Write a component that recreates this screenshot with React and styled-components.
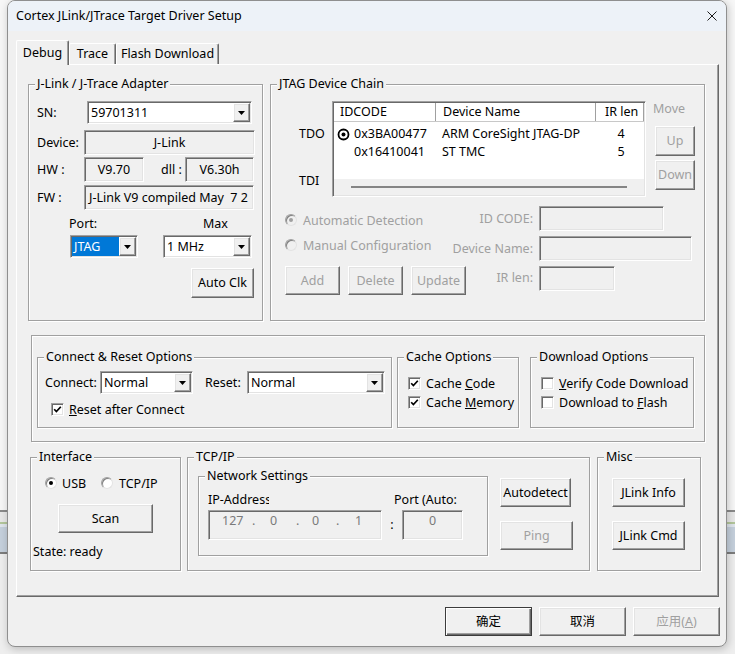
import React from "react";
import styled, { createGlobalStyle, css } from "styled-components";

const GlobalStyle = createGlobalStyle`
  * { box-sizing: border-box; }
  html, body { margin: 0; padding: 0; }
  body {
    width: 735px;
    height: 654px;
    overflow: hidden;
    background: linear-gradient(
      to bottom,
      #f7f7f7 0 510px,
      #8a8a8a 510px 512px,
      #e8e8e8 512px 522px,
      #b3c69b 522px 524px,
      #dfe5ec 524px 527px,
      #c5d0dc 527px 552px,
      #7d7d7d 552px 554px,
      #eeeeee 554px
    );
    font-family: "Noto Sans", "Noto Sans CJK SC", sans-serif;
    font-size: 12.5px;
    color: #000;
  }
`;

const sunken = css`
  border: 1px solid;
  border-color: #a0a0a0 #fff #fff #a0a0a0;
  box-shadow: inset 1px 1px 0 #696969, inset -1px -1px 0 #e3e3e3;
`;

const raised = css`
  border: 1px solid;
  border-color: #fff #696969 #696969 #fff;
  box-shadow: inset -1px -1px 0 #a0a0a0, inset 1px 1px 0 #e3e3e3;
`;

const etched = css`
  border: 1px solid #a0a0a0;
  box-shadow: 1px 1px 0 #fff, inset 1px 1px 0 #fff;
`;

const Window = styled.div`
  margin-left: 7px;
  width: 720px;
  height: 647px;
  border: 1px solid #8f8f8f;
  border-radius: 8px;
  background: #f0f0f0;
  box-shadow: 1px 2px 8px rgba(0, 0, 0, 0.22);
  overflow: hidden;
  display: flex;
  flex-direction: column;
`;

const TitleBar = styled.div`
  flex: none;
  height: 30px;
  background: #edf2f8;
  display: flex;
  align-items: center;
  padding-left: 8px;
  line-height: 16px;
`;

const CloseBox = styled.div`
  margin-left: auto;
  margin-right: 9px;
  display: flex;
`;

const Body = styled.div`
  flex: 1;
  display: flex;
  flex-direction: column;
  padding: 9px 0 0 8px;
`;

const TabStrip = styled.div`
  display: flex;
  align-items: flex-end;
  height: 24px;
  position: relative;
  z-index: 1;
`;

const Tab = styled.div`
  width: ${p => p.$w}px;
  height: ${p => (p.$active ? 25 : 21)}px;
  margin-bottom: ${p => (p.$active ? -1 : 0)}px;
  display: flex;
  align-items: center;
  justify-content: center;
  background: #f0f0f0;
  border-top: 1px solid #fff;
  border-left: 1px solid #fff;
  border-right: 1px solid #696969;
  box-shadow: inset -1px 0 0 #a0a0a0;
  border-radius: 2px 2px 0 0;
  line-height: 16px;
`;

const TabPanel = styled.div`
  width: 703px;
  height: 533px;
  border: 1px solid;
  border-color: #fff #696969 #696969 #fff;
  box-shadow: inset -1px -1px 0 #a0a0a0;
  display: flex;
  flex-direction: column;
`;

const PanelRow = styled.div`
  display: flex;
  align-items: flex-start;
  margin: ${p => p.$mt}px 0 0 ${p => p.$ml}px;
`;

const Group = styled.div`
  ${etched};
  position: relative;
  flex: none;
  width: ${p => p.$w}px;
  height: ${p => p.$h}px;
  margin: ${p => p.$mt || 0}px 0 0 ${p => p.$ml || 0}px;
  display: flex;
  flex-direction: column;
`;

const GroupTitle = styled.span`
  position: absolute;
  top: -9px;
  left: 6px;
  padding: 0 2px;
  background: #f0f0f0;
  line-height: 16px;
  white-space: nowrap;
`;

const OptionsFrame = styled.div`
  ${etched};
  width: 674px;
  height: 107px;
  margin: 14px 0 0 14px;
  padding: 21px 0 0 5px;
  display: flex;
  align-items: flex-start;
`;

const Row = styled.div`
  flex: none;
  display: flex;
  align-items: ${p => (p.$top ? "flex-start" : "center")};
  height: ${p => p.$h || 16}px;
  margin-top: ${p => p.$mt || 0}px;
  padding-left: ${p => p.$pl || 0}px;
  width: ${p => (p.$w ? p.$w + "px" : "auto")};
  overflow: ${p => (p.$clip ? "hidden" : "visible")};
`;

const Label = styled.span`
  flex: none;
  width: ${p => (p.$w ? p.$w + "px" : "auto")};
  margin-left: ${p => p.$ml || 0}px;
  white-space: pre;
  line-height: 16px;
  color: ${p => (p.$disabled ? "#a0a0a0" : "inherit")};
`;

const Field = styled.div`
  ${sunken};
  flex: none;
  width: ${p => p.$w}px;
  height: ${p => p.$h || 25}px;
  margin-left: ${p => p.$ml || 0}px;
  align-self: ${p => (p.$top ? "start" : "auto")};
  background: #f0f0f0;
  display: flex;
  align-items: center;
  justify-content: ${p => (p.$center ? "center" : "flex-start")};
  padding: 0 4px;
  white-space: pre;
  overflow: hidden;
  line-height: 16px;
`;

const ComboBox = styled.div`
  ${sunken};
  flex: none;
  width: ${p => p.$w}px;
  height: 23px;
  margin-left: ${p => p.$ml || 0}px;
  padding: 1px;
  background: #fff;
  display: flex;
`;

const ComboValue = styled.span`
  flex: 1;
  display: flex;
  align-items: center;
  padding-left: 2px;
  white-space: nowrap;
  line-height: 16px;
  background: ${p => (p.$selected ? "#0078d7" : "transparent")};
  color: ${p => (p.$selected ? "#fff" : "#000")};
`;

const DropBtn = styled.span`
  ${raised};
  flex: none;
  width: 17px;
  background: #f0f0f0;
  display: flex;
  align-items: center;
  justify-content: center;
`;

const Btn = styled.button`
  ${raised};
  flex: none;
  font: inherit;
  line-height: 16px;
  padding: 0;
  width: ${p => p.$w}px;
  height: ${p => p.$h || 29}px;
  margin: ${p => p.$mt || 0}px 0 0 ${p => p.$ml || 0}px;
  background: #f0f0f0;
  color: ${p => (p.disabled ? "#a0a0a0" : "#000")};
  display: flex;
  align-items: center;
  justify-content: center;
  ${p =>
    p.$default &&
    css`
      border-color: #3c3c3c;
      box-shadow: inset 1px 1px 0 #fff, inset -1px -1px 0 #696969, inset -2px -2px 0 #a0a0a0;
    `}
`;

const ButtonCol = styled.div`
  display: flex;
  flex-direction: column;
  gap: 14px;
  margin: ${p => p.$mt}px 0 0 ${p => p.$ml}px;
`;

const CheckRow = styled.label`
  display: flex;
  align-items: center;
  gap: 5px;
  height: 16px;
  white-space: nowrap;
`;

const CheckBox = styled.span`
  ${sunken};
  flex: none;
  width: 13px;
  height: 13px;
  background: #fff;
  display: flex;
  align-items: center;
  justify-content: center;
`;

const RadioRow = styled.label`
  flex: none;
  display: flex;
  align-items: center;
  gap: ${p => p.$gap || 5}px;
  width: ${p => (p.$w ? p.$w + "px" : "auto")};
  height: 16px;
  margin-top: ${p => p.$mt || 0}px;
  white-space: nowrap;
  color: ${p => (p.$disabled ? "#a0a0a0" : "#000")};
`;

const RadioCircle = styled.span`
  flex: none;
  width: 12px;
  height: 12px;
  border-radius: 50%;
  border: 1px solid;
  border-color: #a0a0a0 #e3e3e3 #e3e3e3 #a0a0a0;
  box-shadow: inset 1px 1px 0 #808080;
  background: ${p => (p.$disabled ? "#f0f0f0" : "#fff")};
  display: flex;
  align-items: center;
  justify-content: center;
  &::after {
    content: "";
    display: ${p => (p.$checked ? "block" : "none")};
    width: 4px;
    height: 4px;
    border-radius: 50%;
    background: ${p => (p.$disabled ? "#a0a0a0" : "#000")};
  }
`;

const PinCol = styled.div`
  flex: none;
  width: 61px;
  padding-left: 28px;
  display: flex;
  flex-direction: column;
`;

const PinLabel = styled.span`
  line-height: 16px;
  margin-top: ${p => p.$mt}px;
`;

const ListBox = styled.div`
  ${sunken};
  flex: none;
  width: 314px;
  height: 96px;
  padding: 1px;
  background: #fff;
  display: flex;
  flex-direction: column;
`;

const ListHead = styled.div`
  flex: none;
  display: flex;
  height: 19px;
  border-bottom: 1px solid #c8c8c8;
`;

const HeadCell = styled.div`
  flex: ${p => (p.$w ? "none" : "1")};
  width: ${p => (p.$w ? p.$w + "px" : "auto")};
  padding-left: ${p => p.$pl}px;
  border-right: 1px solid #a0a0a0;
  display: flex;
  align-items: center;
  line-height: 16px;
  white-space: nowrap;
`;

const ListRows = styled.div`
  flex: 1;
  padding-top: 3px;
`;

const ListRow = styled.div`
  display: flex;
  align-items: center;
  height: 18px;
`;

const Cell = styled.div`
  flex: none;
  display: flex;
  align-items: center;
  gap: 4px;
  width: ${p => p.$w}px;
  padding-left: ${p => p.$pl || 0}px;
  justify-content: ${p => (p.$center ? "center" : "flex-start")};
  white-space: nowrap;
  line-height: 16px;
`;

const ScrollArea = styled.div`
  flex: none;
  height: 16px;
  background: #f0f0f0;
  padding: 7px 17px 0;
`;

const ScrollThumb = styled.div`
  height: 2px;
  background: #858585;
`;

const MoveCol = styled.div`
  display: flex;
  flex-direction: column;
  margin-left: 7px;
`;

const ConfigGrid = styled.div`
  display: grid;
  grid-template-columns: 161px 81px auto;
  grid-template-rows: 25px 25px 29px;
  column-gap: 6px;
  row-gap: 5px;
  margin: 9px 0 0 14px;
`;

const FieldLabel = styled.span`
  justify-self: end;
  align-self: ${p => (p.$top ? "start" : "center")};
  margin-top: ${p => (p.$top ? 4 : 0)}px;
  line-height: 16px;
  white-space: nowrap;
  color: #a0a0a0;
`;

const ButtonRow = styled.div`
  display: flex;
  gap: 8px;
`;

const NetGrid = styled.div`
  display: grid;
  grid-template-columns: 174px 20px 61px;
  grid-template-rows: 16px 30px;
  row-gap: 2px;
  margin: 15px 0 0 9px;
`;

const ClipLabel = styled.span`
  width: ${p => p.$w}px;
  overflow: hidden;
  white-space: nowrap;
  line-height: 16px;
`;

const PortLabel = styled.span`
  grid-column: 2 / 4;
  padding-left: 12px;
  line-height: 16px;
  white-space: nowrap;
`;

const IpField = styled.div`
  ${sunken};
  background: #f0f0f0;
  display: flex;
  align-items: flex-start;
  justify-content: ${p => (p.$center ? "center" : "flex-start")};
  padding: 2px 0 0 ${p => (p.$center ? 0 : 13)}px;
  color: #7a7a7a;
  line-height: 16px;
`;

const IpSeg = styled.span`
  width: ${p => (p.$w ? p.$w + "px" : "auto")};
`;

const Colon = styled.span`
  justify-self: center;
  align-self: center;
  line-height: 16px;
`;

const BottomBar = styled.div`
  display: flex;
  justify-content: flex-end;
  gap: 7px;
  margin-top: 10px;
  padding-right: 6px;
`;

const Arrow = () => (
  <svg width="7" height="4" viewBox="0 0 7 4">
    <path d="M0 0H7L3.5 4Z" fill="#000" />
  </svg>
);

const Combo = ({ w, ml, value, selected }) => (
  <ComboBox $w={w} $ml={ml}>
    <ComboValue $selected={selected}>{value}</ComboValue>
    <DropBtn>
      <Arrow />
    </DropBtn>
  </ComboBox>
);

const Check = ({ checked, children }) => (
  <CheckRow>
    <CheckBox>
      {checked && (
        <svg width="9" height="9" viewBox="0 0 9 9">
          <path d="M1.2 4.2L3.4 6.6L7.8 1.8" fill="none" stroke="#000" strokeWidth="1.7" />
        </svg>
      )}
    </CheckBox>
    <span>{children}</span>
  </CheckRow>
);

const Radio = ({ checked, disabled, w, mt, gap, children }) => (
  <RadioRow $disabled={disabled} $w={w} $mt={mt} $gap={gap}>
    <RadioCircle $checked={checked} $disabled={disabled} />
    <span>{children}</span>
  </RadioRow>
);

const SelectMark = () => (
  <svg width="13" height="13" viewBox="0 0 13 13">
    <circle cx="6.5" cy="6.5" r="5" fill="none" stroke="#000" strokeWidth="1.8" />
    <circle cx="6.5" cy="6.5" r="2" fill="#000" />
  </svg>
);

const chain = [
  { id: "0x3BA00477", name: "ARM CoreSight JTAG-DP", ir: 4, sel: true },
  { id: "0x16410041", name: "ST TMC", ir: 5 },
];

export default function App() {
  return (
    <>
      <GlobalStyle />
      <Window>
        <TitleBar>
          <span>Cortex JLink/JTrace Target Driver Setup</span>
          <CloseBox>
            <svg width="10" height="10" viewBox="0 0 10 10">
              <path d="M0.5 0.5L9.5 9.5M9.5 0.5L0.5 9.5" stroke="#1a1a1a" strokeWidth="1" />
            </svg>
          </CloseBox>
        </TitleBar>

        <Body>
          <TabStrip>
            <Tab $active $w={53}>Debug</Tab>
            <Tab $w={47}>Trace</Tab>
            <Tab $w={103}>Flash Download</Tab>
          </TabStrip>

          <TabPanel>
            <PanelRow $mt={19} $ml={11}>
              <Group $w={235} $h={237}>
                <GroupTitle>J-Link / J-Trace Adapter</GroupTitle>
                <Row $h={23} $mt={16} $pl={8}>
                  <Label $w={50}>SN:</Label>
                  <Combo w={165} value="59701311" />
                </Row>
                <Row $h={25} $mt={6} $pl={8}>
                  <Label $w={47}>Device:</Label>
                  <Field $w={171} $center>J-Link</Field>
                </Row>
                <Row $h={25} $mt={2} $pl={8}>
                  <Label $w={47}>HW :</Label>
                  <Field $w={60} $center>V9.70</Field>
                  <Label $w={24} $ml={17}>dll :</Label>
                  <Field $w={69} $center>V6.30h</Field>
                </Row>
                <Row $h={25} $mt={3} $pl={8}>
                  <Label $w={47}>FW :</Label>
                  <Field $w={170}>J-Link V9 compiled May  7 2</Field>
                </Row>
                <Row $mt={6} $pl={8}>
                  <Label $w={134} $ml={32}>Port:</Label>
                  <Label>Max</Label>
                </Row>
                <Row $h={23} $mt={3} $pl={8}>
                  <Combo w={68} ml={33} value="JTAG" selected />
                  <Combo w={89} ml={25} value="1 MHz" />
                </Row>
                <Row $h={30} $mt={10} $pl={8}>
                  <Btn $w={63} $h={30} $ml={154}>Auto Clk</Btn>
                </Row>
              </Group>

              <Group $w={435} $h={237} $ml={7}>
                <GroupTitle>JTAG Device Chain</GroupTitle>
                <Row $h={96} $mt={16} $top>
                  <PinCol>
                    <PinLabel $mt={25}>TDO</PinLabel>
                    <PinLabel $mt={31}>TDI</PinLabel>
                  </PinCol>
                  <ListBox>
                    <ListHead>
                      <HeadCell $w={102} $pl={6}>IDCODE</HeadCell>
                      <HeadCell $w={160} $pl={7}>Device Name</HeadCell>
                      <HeadCell $pl={9}>IR len</HeadCell>
                    </ListHead>
                    <ListRows>
                      {chain.map(d => (
                        <ListRow key={d.id}>
                          <Cell $w={108} $pl={d.sel ? 3 : 20}>
                            {d.sel && <SelectMark />}
                            {d.id}
                          </Cell>
                          <Cell $w={160}>{d.name}</Cell>
                          <Cell $w={38} $center>{d.ir}</Cell>
                        </ListRow>
                      ))}
                    </ListRows>
                    <ScrollArea>
                      <ScrollThumb />
                    </ScrollArea>
                  </ListBox>
                  <MoveCol>
                    <Label $disabled>Move</Label>
                    <Btn $w={40} $h={30} $mt={9} $ml={2} disabled>Up</Btn>
                    <Btn $w={40} $h={30} $mt={4} $ml={2} disabled>Down</Btn>
                  </MoveCol>
                </Row>
                <ConfigGrid>
                  <Radio checked disabled mt={6} gap={6}>Automatic Detection</Radio>
                  <FieldLabel>ID CODE:</FieldLabel>
                  <Field $w={125} />
                  <Radio disabled mt={1} gap={6}>Manual Configuration</Radio>
                  <FieldLabel>Device Name:</FieldLabel>
                  <Field $w={153} />
                  <ButtonRow>
                    <Btn $w={55} disabled>Add</Btn>
                    <Btn $w={55} disabled>Delete</Btn>
                    <Btn $w={55} disabled>Update</Btn>
                  </ButtonRow>
                  <FieldLabel $top>IR len:</FieldLabel>
                  <Field $w={76} $top />
                </ConfigGrid>
              </Group>
            </PanelRow>

            <OptionsFrame>
              <Group $w={355} $h={71}>
                <GroupTitle>Connect &amp; Reset Options</GroupTitle>
                <Row $h={23} $mt={13} $pl={7}>
                  <Label $w={55}>Connect:</Label>
                  <Combo w={93} value="Normal" />
                  <Label $w={42} $ml={12}>Reset:</Label>
                  <Combo w={138} value="Normal" />
                </Row>
                <Row $mt={7} $pl={13}>
                  <Check checked>
                    <u>R</u>eset after Connect
                  </Check>
                </Row>
              </Group>
              <Group $w={122} $h={71} $ml={5}>
                <GroupTitle>Cache Options</GroupTitle>
                <Row $mt={17} $pl={10}>
                  <Check checked>
                    Cache <u>C</u>ode
                  </Check>
                </Row>
                <Row $mt={3} $pl={10}>
                  <Check checked>
                    Cache <u>M</u>emory
                  </Check>
                </Row>
              </Group>
              <Group $w={164} $h={71} $ml={11}>
                <GroupTitle>Download Options</GroupTitle>
                <Row $mt={17} $pl={10} $w={157} $clip>
                  <Check>
                    <u>V</u>erify Code Download
                  </Check>
                </Row>
                <Row $mt={3} $pl={10}>
                  <Check>
                    Download to <u>F</u>lash
                  </Check>
                </Row>
              </Group>
            </OptionsFrame>

            <PanelRow $mt={15} $ml={13}>
              <Group $w={151} $h={114}>
                <GroupTitle>Interface</GroupTitle>
                <Row $mt={17} $pl={14}>
                  <Radio checked w={56}>USB</Radio>
                  <Radio gap={6}>TCP/IP</Radio>
                </Row>
                <Btn $w={95} $mt={13} $ml={27}>Scan</Btn>
                <Row $mt={11} $pl={2}>
                  <Label>State: ready</Label>
                </Row>
              </Group>

              <Group $w={403} $h={114} $ml={6}>
                <GroupTitle>TCP/IP</GroupTitle>
                <Row $h={96} $top>
                  <Group $w={290} $h={80} $mt={18} $ml={10}>
                    <GroupTitle>Network Settings</GroupTitle>
                    <NetGrid>
                      <ClipLabel $w={61}>IP-Address</ClipLabel>
                      <PortLabel>Port (Auto:</PortLabel>
                      <IpField>
                        <IpSeg $w={30}>127</IpSeg>
                        <IpSeg $w={18}>.</IpSeg>
                        <IpSeg $w={26}>0</IpSeg>
                        <IpSeg $w={16}>.</IpSeg>
                        <IpSeg $w={24}>0</IpSeg>
                        <IpSeg $w={19}>.</IpSeg>
                        <IpSeg>1</IpSeg>
                      </IpField>
                      <Colon>:</Colon>
                      <IpField $center>0</IpField>
                    </NetGrid>
                  </Group>
                  <ButtonCol $mt={20} $ml={12}>
                    <Btn $w={71}>Autodetect</Btn>
                    <Btn $w={73} disabled>Ping</Btn>
                  </ButtonCol>
                </Row>
              </Group>

              <Group $w={104} $h={114} $ml={7}>
                <GroupTitle>Misc</GroupTitle>
                <ButtonCol $mt={20} $ml={14}>
                  <Btn $w={73}>JLink Info</Btn>
                  <Btn $w={73}>JLink Cmd</Btn>
                </ButtonCol>
              </Group>
            </PanelRow>
          </TabPanel>

          <BottomBar>
            <Btn $w={87} $default>确定</Btn>
            <Btn $w={87}>取消</Btn>
            <Btn $w={87} disabled>
              应用(<u>A</u>)
            </Btn>
          </BottomBar>
        </Body>
      </Window>
    </>
  );
}
